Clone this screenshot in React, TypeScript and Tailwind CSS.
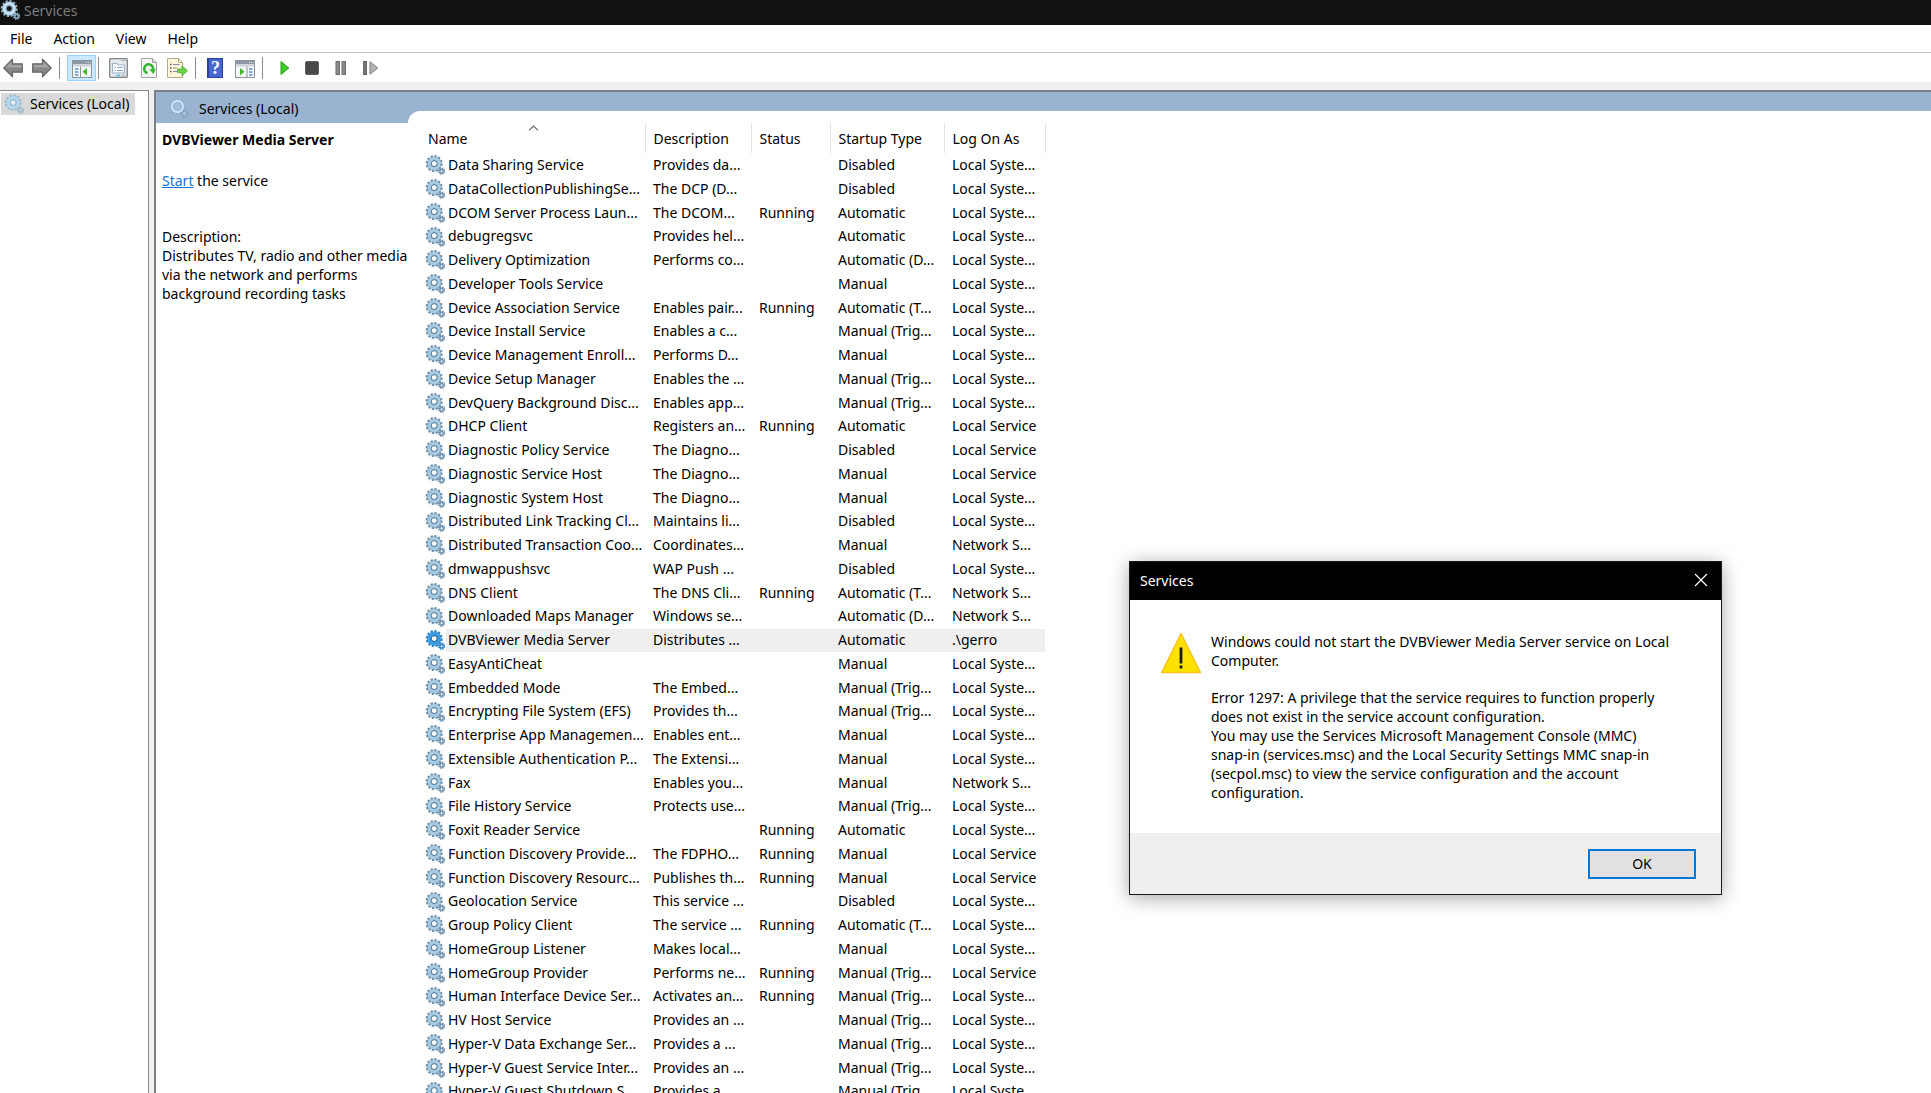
import React from 'react';
import clsx from 'clsx';

interface Service {
  name: string;
  description: string;
  status: string;
  startup: string;
  logOn: string;
}

const SYSTEM = 'Local Syste...';
const LOCAL = 'Local Service';
const NETWORK = 'Network S...';
const TRIGGER = 'Manual (Trig...';

const rows: string[][] = [
  ['Data Sharing Service', 'Provides da...', '', 'Disabled', SYSTEM],
  ['DataCollectionPublishingSe...', 'The DCP (D...', '', 'Disabled', SYSTEM],
  ['DCOM Server Process Laun...', 'The DCOM...', 'Running', 'Automatic', SYSTEM],
  ['debugregsvc', 'Provides hel...', '', 'Automatic', SYSTEM],
  ['Delivery Optimization', 'Performs co...', '', 'Automatic (D...', SYSTEM],
  ['Developer Tools Service', '', '', 'Manual', SYSTEM],
  ['Device Association Service', 'Enables pair...', 'Running', 'Automatic (T...', SYSTEM],
  ['Device Install Service', 'Enables a c...', '', TRIGGER, SYSTEM],
  ['Device Management Enroll...', 'Performs D...', '', 'Manual', SYSTEM],
  ['Device Setup Manager', 'Enables the ...', '', TRIGGER, SYSTEM],
  ['DevQuery Background Disc...', 'Enables app...', '', TRIGGER, SYSTEM],
  ['DHCP Client', 'Registers an...', 'Running', 'Automatic', LOCAL],
  ['Diagnostic Policy Service', 'The Diagno...', '', 'Disabled', LOCAL],
  ['Diagnostic Service Host', 'The Diagno...', '', 'Manual', LOCAL],
  ['Diagnostic System Host', 'The Diagno...', '', 'Manual', SYSTEM],
  ['Distributed Link Tracking Cl...', 'Maintains li...', '', 'Disabled', SYSTEM],
  ['Distributed Transaction Coo...', 'Coordinates...', '', 'Manual', NETWORK],
  ['dmwappushsvc', 'WAP Push ...', '', 'Disabled', SYSTEM],
  ['DNS Client', 'The DNS Cli...', 'Running', 'Automatic (T...', NETWORK],
  ['Downloaded Maps Manager', 'Windows se...', '', 'Automatic (D...', NETWORK],
  ['DVBViewer Media Server', 'Distributes ...', '', 'Automatic', '.\\gerro'],
  ['EasyAntiCheat', '', '', 'Manual', SYSTEM],
  ['Embedded Mode', 'The Embed...', '', TRIGGER, SYSTEM],
  ['Encrypting File System (EFS)', 'Provides th...', '', TRIGGER, SYSTEM],
  ['Enterprise App Managemen...', 'Enables ent...', '', 'Manual', SYSTEM],
  ['Extensible Authentication P...', 'The Extensi...', '', 'Manual', SYSTEM],
  ['Fax', 'Enables you...', '', 'Manual', NETWORK],
  ['File History Service', 'Protects use...', '', TRIGGER, SYSTEM],
  ['Foxit Reader Service', '', 'Running', 'Automatic', SYSTEM],
  ['Function Discovery Provide...', 'The FDPHO...', 'Running', 'Manual', LOCAL],
  ['Function Discovery Resourc...', 'Publishes th...', 'Running', 'Manual', LOCAL],
  ['Geolocation Service', 'This service ...', '', 'Disabled', SYSTEM],
  ['Group Policy Client', 'The service ...', 'Running', 'Automatic (T...', SYSTEM],
  ['HomeGroup Listener', 'Makes local...', '', 'Manual', SYSTEM],
  ['HomeGroup Provider', 'Performs ne...', 'Running', TRIGGER, LOCAL],
  ['Human Interface Device Ser...', 'Activates an...', 'Running', TRIGGER, SYSTEM],
  ['HV Host Service', 'Provides an ...', '', TRIGGER, SYSTEM],
  ['Hyper-V Data Exchange Ser...', 'Provides a ...', '', TRIGGER, SYSTEM],
  ['Hyper-V Guest Service Inter...', 'Provides an ...', '', TRIGGER, SYSTEM],
  ['Hyper-V Guest Shutdown S...', 'Provides a ...', '', TRIGGER, SYSTEM],
];

const services: Service[] = rows.map(([name, description, status, startup, logOn]) => ({
  name,
  description,
  status,
  startup,
  logOn,
}));

const SELECTED = 'DVBViewer Media Server';

const columns = [
  { label: 'Name', className: 'w-[220px] pl-[3px]' },
  { label: 'Description', className: 'w-[106px] pl-2' },
  { label: 'Status', className: 'w-[79px] pl-2' },
  { label: 'Startup Type', className: 'w-[114px] pl-2' },
  { label: 'Log On As', className: 'w-[101px] pl-2' },
];

type GearTone = 'row' | 'selected' | 'pale' | 'title';

const gearTones: Record<GearTone, { teeth: string; ring: string; inner: string; hole: string }> = {
  row: { teeth: '#6f93ae', ring: '#a6cbe2', inner: '#5b87a8', hole: '#ffffff' },
  selected: { teeth: '#2f86c9', ring: '#3b9be0', inner: '#1d6dae', hole: '#ffffff' },
  pale: { teeth: '#a0bdcf', ring: '#b4d9ec', inner: '#8fb4cb', hole: '#e6eef3' },
  title: { teeth: '#8fb0c6', ring: '#c6e2f3', inner: '#7fa6c2', hole: '#111111' },
};

const GearIcon = ({ tone = 'row' }: { tone?: GearTone }) => {
  const c = gearTones[tone];
  return (
    <svg className="h-5 w-5 shrink-0" viewBox="0 0 20 20" fill="none" aria-hidden="true">
      <circle cx="9.2" cy="8.6" r="7.4" stroke={c.teeth} strokeWidth="2.2" strokeDasharray="2.3 1.57" />
      <circle cx="9.2" cy="8.6" r="6.6" stroke={c.teeth} strokeWidth="1" />
      <circle cx="9.2" cy="8.6" r="4.8" stroke={c.ring} strokeWidth="3.4" />
      <circle cx="9.2" cy="8.6" r="3" fill={c.hole} stroke={c.inner} strokeWidth="1.1" />
      <circle cx="16.6" cy="16.2" r="2.7" stroke={c.teeth} strokeWidth="2" strokeDasharray="1.4 0.72" />
      <circle cx="16.6" cy="16.2" r="1.7" stroke={c.teeth} strokeWidth="1.4" />
    </svg>
  );
};

// Banner variant: a plain glowing ring with a faint small gear
const RingIcon = () => (
  <svg className="h-5 w-5 shrink-0" viewBox="0 0 20 20" fill="none" aria-hidden="true">
    <circle cx="8.5" cy="8.5" r="7" stroke="#86a9c9" strokeWidth="1.6" strokeDasharray="1.8 1.86" />
    <circle cx="8.5" cy="8.5" r="5.4" stroke="#c3e2f3" strokeWidth="2.6" />
    <circle cx="8.5" cy="8.5" r="3.8" fill="#a5bfda" stroke="#86abc9" strokeWidth="0.8" />
    <circle cx="15.6" cy="15.8" r="2.8" stroke="#7d9cb9" strokeWidth="2" strokeDasharray="1.2 1" />
    <circle cx="15.6" cy="15.8" r="1.3" stroke="#b4cfe2" strokeWidth="1" />
  </svg>
);

const ArrowIcon = ({ flip = false }: { flip?: boolean }) => (
  <svg className={clsx('h-5 w-5', flip && '-scale-x-100')} viewBox="0 0 20 20" aria-hidden="true">
    <path d="M.8 10 9.5 1.2V5.8H19.3V14.2H9.5V18.8Z" fill="#868686" stroke="#666" strokeWidth="1.2" strokeLinejoin="round" />
    <path d="M2.6 9.6 8.5 3.7V7H18.3V9.6Z" fill="#a6a6a6" />
  </svg>
);

const WindowFrame = ({ children }: { children: React.ReactNode }) => (
  <svg className="h-[18px] w-5" viewBox="0 0 20 18" aria-hidden="true">
    <rect x=".5" y=".5" width="19" height="17" fill="#f4f6f8" stroke="#8c949c" />
    <rect x="1" y="1" width="18" height="3" fill="#8d97a3" />
    <path d="M14 2.5h1M16 2.5h1M18 2.5h.6" stroke="#e8ecf0" />
    <rect x="1" y="4" width="18" height="2.5" fill="#cfd4da" />
    {children}
  </svg>
);

const TreePaneIcon = () => (
  <WindowFrame>
    <path d="M8.5 6.5V17" stroke="#8c949c" />
    <path d="M3 9h3.5M3 12h3.5M3 15h3.5" stroke="#5d93cf" strokeWidth="1.4" />
    <path d="M15 8v7.5L10.5 11.8Z" fill="#46b52d" />
  </WindowFrame>
);

const ActionPaneIcon = () => (
  <WindowFrame>
    <path d="M12 6.5V17" stroke="#8c949c" />
    <path d="M14 9h3.5M14 12h3.5M14 15h3.5" stroke="#5d93cf" strokeWidth="1.4" />
    <path d="M5 8v7.5L9.5 11.8Z" fill="#46b52d" />
  </WindowFrame>
);

const PropertiesIcon = () => (
  <svg className="h-5 w-[19px]" viewBox="0 0 19 20" aria-hidden="true">
    <rect x=".7" y=".7" width="17.6" height="18.6" rx="1" fill="#e6e9ec" stroke="#7e858b" strokeWidth="1.3" />
    <path d="M12.5 2.5h1M14.5 2.5h1M16.3 2.5h.8" stroke="#7e858b" />
    <path d="M3.5 15V5.500H8L9 7h6.500v8Z" fill="#fff" stroke="#9ab0cc" />
    <path d="M5.500 9.500h1.500M8 9.500h6M5.500 12.500h1.500M8 12.500h6" stroke="#8aa4c4" />
    <path d="M7.500 17.500h3.500" stroke="#3fc0ee" strokeWidth="1.600" />
    <path d="M12.500 17.500h4" stroke="#b4b9be" strokeWidth="1.400" />
  </svg>
);

const RefreshIcon = () => (
  <svg className="h-5 w-4" viewBox="0 0 16 20" fill="none" aria-hidden="true">
    <path d="M.5 .5h11l4 4v15H.5Z" fill="#f5f5f3" stroke="#a3a3a3" />
    <path d="M11.5 .5v4h4" stroke="#a3a3a3" fill="#dcdcdc" />
    <path d="M6.500 15A4.400 4.400 0 1 1 12 11.500" stroke="#35b22f" strokeWidth="2.600" />
    <path d="M8.200 11.200h6.600l-2.300 4.800Z" fill="#35b22f" />
  </svg>
);

const ExportIcon = () => (
  <svg className="h-5 w-[21px]" viewBox="0 0 21 20" fill="none" aria-hidden="true">
    <path d="M.5 .5h11l4 4v15H.5Z" fill="#fbf6dc" stroke="#b3aa8a" />
    <path d="M11.5 .5v4h4" stroke="#b3aa8a" />
    <path d="M3 6.5h1.5M3 10h1.5M3 13.5h1.5" stroke="#555" strokeWidth="1.4" />
    <path d="M6 6.5h6.5M6 10h4M6 13.5h4" stroke="#8d89a6" strokeWidth="1.2" />
    <path d="M10.5 11h4.5V7.8L20.5 12.8 15 17.8V14.6H10.5Z" fill="#6cd246" stroke="#44ad2c" strokeWidth=".8" />
  </svg>
);

const HelpIcon = () => (
  <span className="flex h-5 w-4 items-center justify-center border border-l-2 border-[#2b3f9d] bg-[#4766cf] font-['Liberation_Serif',serif] text-lg leading-5 font-bold text-white">
    ?
  </span>
);

const PlayIcon = () => (
  <svg className="h-4 w-[10px]" viewBox="0 0 10 16" aria-hidden="true">
    <path d="M1 1.500 8.800 8 1 14.500Z" fill="#3ecb25" stroke="#2b9c1c" strokeLinejoin="round" />
  </svg>
);

const StopIcon = () => (
  <svg className="h-[14px] w-[14px]" viewBox="0 0 14 14" aria-hidden="true">
    <rect x=".5" y=".5" width="13" height="13" rx="1.5" fill="#484848" stroke="#5e5e5e" />
  </svg>
);

const PauseIcon = () => (
  <svg className="h-[14px] w-3" viewBox="0 0 12 14" aria-hidden="true">
    <rect x="1" y=".5" width="3.5" height="13" fill="#8c8c8c" stroke="#6b6b6b" />
    <rect x="7" y=".5" width="3.5" height="13" fill="#8c8c8c" stroke="#6b6b6b" />
  </svg>
);

const RestartIcon = () => (
  <svg className="h-[14px] w-4" viewBox="0 0 16 14" aria-hidden="true">
    <rect x=".5" y=".5" width="3" height="13" fill="#777" stroke="#666" />
    <path d="M7 .8 14.8 7 7 13.2Z" fill="#b5b5b5" stroke="#7f7f7f" />
  </svg>
);

const WarningIcon = () => (
  <svg className="h-[42px] w-[42px] shrink-0" viewBox="0 0 42 42" aria-hidden="true">
    <path d="M20 1.5 39.500 40.500H.8Z" fill="#fde100" stroke="#fcc016" strokeWidth="1.4" strokeLinejoin="round" />
    <rect x="18.6" y="15.5" width="2.8" height="16" fill="#1a1a1a" />
    <rect x="18.6" y="33.5" width="2.8" height="3" fill="#1a1a1a" />
  </svg>
);

const ToolButton = ({ label, className, children }: { label: string; className: string; children: React.ReactNode }) => (
  <button type="button" aria-label={label} className={clsx('flex h-[26px] shrink-0 items-center justify-center', className)}>
    {children}
  </button>
);

const Separator = ({ className }: { className: string }) => (
  <div className={clsx('h-[22px] w-px shrink-0 bg-[#8d8d8d]', className)} />
);

const Toolbar = () => (
  <div className="flex h-[30px] items-center border-t border-[#bcc1c6] bg-white pl-[3px]">
    <ToolButton label="Back" className="w-5">
      <ArrowIcon />
    </ToolButton>
    <ToolButton label="Forward" className="ml-[9px] w-5">
      <ArrowIcon flip />
    </ToolButton>
    <Separator className="mx-[7px]" />
    <ToolButton label="Show console tree" className="w-[29px] border border-[#99d1ff] bg-[#cce8ff] pt-[3px]">
      <TreePaneIcon />
    </ToolButton>
    <Separator className="ml-[2px]" />
    <ToolButton label="Properties" className="ml-[10px] w-[19px]">
      <PropertiesIcon />
    </ToolButton>
    <ToolButton label="Refresh" className="ml-[13px] w-4">
      <RefreshIcon />
    </ToolButton>
    <ToolButton label="Export list" className="ml-[10px] w-[21px]">
      <ExportIcon />
    </ToolButton>
    <Separator className="ml-[7px]" />
    <ToolButton label="Help" className="ml-[11px] w-4">
      <HelpIcon />
    </ToolButton>
    <ToolButton label="Show action pane" className="ml-3 w-5 pt-[3px]">
      <ActionPaneIcon />
    </ToolButton>
    <Separator className="ml-[7px]" />
    <ToolButton label="Start service" className="ml-[17px] w-[10px]">
      <PlayIcon />
    </ToolButton>
    <ToolButton label="Stop service" className="ml-[15px] w-[14px]">
      <StopIcon />
    </ToolButton>
    <ToolButton label="Pause service" className="ml-4 w-3">
      <PauseIcon />
    </ToolButton>
    <ToolButton label="Restart service" className="ml-4 w-4">
      <RestartIcon />
    </ToolButton>
  </div>
);

const DetailPane = () => (
  <section className="flex w-[252px] shrink-0 flex-col">
    <div className="flex h-[31px] items-center pt-px pl-[13px]">
      <RingIcon />
      <h1 className="pl-[10px]">Services (Local)</h1>
    </div>
    <div className="flex-1 bg-white pt-[7px] pl-[6px]">
      <h2 className="font-bold">{SELECTED}</h2>
      <p className="mt-[22px]">
        <a href="#start" className="text-[#1a73d1] underline">
          Start
        </a>{' '}
        the service
      </p>
      <p className="mt-[37px]">Description:</p>
      <p>
        Distributes TV, radio and other media via the network and performs background recording tasks
      </p>
    </div>
  </section>
);

const ServiceRow = ({ service }: { service: Service }) => {
  const selected = service.name === SELECTED;
  const fill = selected && 'bg-[#efefef]';
  return (
    <tr className="h-6 nth-[4n]:h-[23px]">
      <td className="p-0">
        <div className="flex items-center">
          <GearIcon tone={selected ? 'selected' : 'row'} />
          <div className={clsx('ml-px h-[23px] flex-1 pl-[2px] leading-[22px]', fill)}>{service.name}</div>
        </div>
      </td>
      {[service.description, service.status, service.startup, service.logOn].map((text, i) => (
        <td key={i} className="p-0">
          <div className={clsx('h-[23px] pl-2 leading-[22px]', fill)}>{text || '\u00a0'}</div>
        </td>
      ))}
    </tr>
  );
};

const ServiceTable = () => (
  <table className="ml-[17px] w-[620px] table-fixed border-collapse whitespace-nowrap">
    <thead>
      <tr className="h-[30px]">
        {columns.map(({ label, className }) => (
          <th key={label} className={clsx('relative border-r border-[#e2e2e2] py-0 pr-0 text-left font-normal', className)}>
            {label}
            {label === 'Name' && (
              <svg className="absolute top-[2px] left-[103px] h-[6px] w-[11px]" viewBox="0 0 11 6" fill="none" aria-hidden="true">
                <path d="M1 5.3 5.5 1 10 5.3" stroke="#6f6f6f" strokeWidth="1.2" />
              </svg>
            )}
          </th>
        ))}
      </tr>
    </thead>
    <tbody>
      {services.map((service) => (
        <ServiceRow key={service.name} service={service} />
      ))}
    </tbody>
  </table>
);

const ErrorDialog = () => (
  <div
    role="dialog"
    aria-labelledby="dialog-title"
    className="absolute top-[561px] left-[1129px] w-[593px] border border-[#1a1a1a] bg-white shadow-[0_3px_18px_rgba(0,0,0,0.35)]"
  >
    <div className="flex h-[38px] items-center justify-between bg-black pr-[13px] pb-[2px] pl-[10px] text-white">
      <span id="dialog-title">Services</span>
      <button type="button" aria-label="Close">
        <svg className="h-[14px] w-[14px]" viewBox="0 0 14 14" fill="none" aria-hidden="true">
          <path d="M1 1 13 13M13 1 1 13" stroke="#fff" strokeWidth="1.2" />
        </svg>
      </button>
    </div>
    <div className="flex px-[31px] pt-8 pb-[31px]">
      <WarningIcon />
      <div className="w-[470px] pl-2">
        <p>Windows could not start the DVBViewer Media Server service on Local Computer.</p>
        <p className="mt-[18px]">
          Error 1297: A privilege that the service requires to function properly does not exist in the service
          account configuration.
        </p>
        <p>
          You may use the Services Microsoft Management Console (MMC) snap-in (services.msc) and the Local
          Security Settings MMC snap-in (secpol.msc) to view the service configuration and the account
          configuration.
        </p>
      </div>
    </div>
    <div className="flex h-[61px] items-start justify-end bg-[#efefef] pt-4 pr-[25px]">
      <button type="button" className="h-[30px] w-[108px] border-2 border-[#0078d7] bg-[#e1e1e1] pb-[2px]">
        OK
      </button>
    </div>
  </div>
);

export default function App() {
  return (
    <div className="relative flex h-screen flex-col overflow-hidden bg-[#f0f0f0] font-['Noto_Sans',sans-serif] text-sm leading-[19px] text-black">
      <header className="flex h-[25px] shrink-0 items-start bg-[#111] text-[#7d7d7d]">
        <GearIcon tone="title" />
        <span className="pt-px pl-1">Services</span>
      </header>
      <nav className="flex h-[27px] shrink-0 items-center bg-white pl-[10px]">
        {['File', 'Action', 'View', 'Help'].map((item) => (
          <button key={item} type="button" className="mr-[21px] pb-px">
            {item}
          </button>
        ))}
      </nav>
      <Toolbar />
      <main className="mt-2 flex min-h-0 flex-1">
        <aside className="w-[149px] shrink-0 border-t border-r border-[#828790] bg-white pt-[2px] pl-px">
          <div className="flex h-[22px] w-[134px] items-center bg-[#d9d9d9] pl-[3px]">
            <GearIcon tone="pale" />
            <span className="pb-[2px] pl-[6px]">Services (Local)</span>
          </div>
        </aside>
        <div className="ml-[5px] flex min-w-0 flex-1 border-t-2 border-l-2 border-[#7c7f83] bg-[#99b3d1]">
          <DetailPane />
          <section className="mt-[19px] min-w-0 flex-1 overflow-hidden rounded-tl-xl bg-white pt-3">
            <ServiceTable />
          </section>
        </div>
      </main>
      <ErrorDialog />
    </div>
  );
}
